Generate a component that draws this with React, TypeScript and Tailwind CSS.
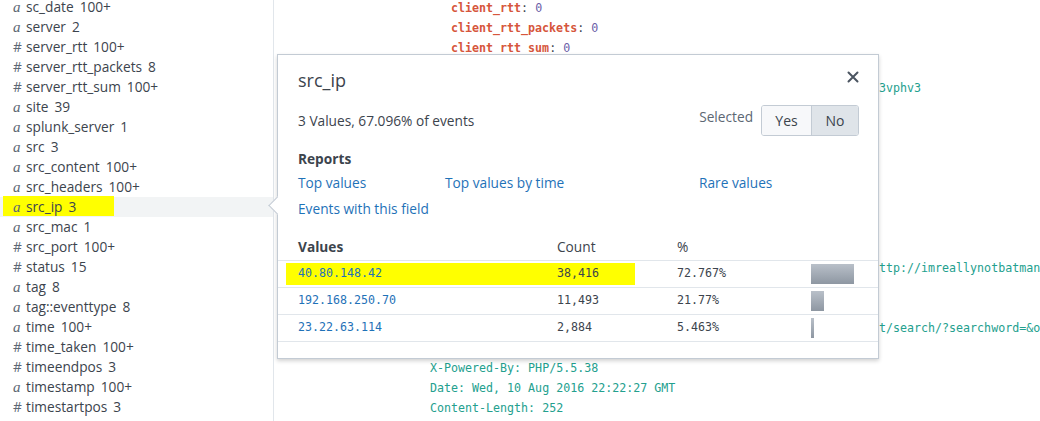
import React from "react";

const fields: [string, string, string][] = [
  ["a", "sc_date", "100+"],
  ["a", "server", "2"],
  ["#", "server_rtt", "100+"],
  ["#", "server_rtt_packets", "8"],
  ["#", "server_rtt_sum", "100+"],
  ["a", "site", "39"],
  ["a", "splunk_server", "1"],
  ["a", "src", "3"],
  ["a", "src_content", "100+"],
  ["a", "src_headers", "100+"],
  ["a", "src_ip", "3"],
  ["a", "src_mac", "1"],
  ["#", "src_port", "100+"],
  ["#", "status", "15"],
  ["a", "tag", "8"],
  ["a", "tag::eventtype", "8"],
  ["a", "time", "100+"],
  ["#", "time_taken", "100+"],
  ["#", "timeendpos", "3"],
  ["a", "timestamp", "100+"],
  ["#", "timestartpos", "3"],
  ["a", "timezone", "1"],
];

const rows = [
  { v: "40.80.148.42", c: "38,416", p: "72.767%", w: 43, hl: true },
  { v: "192.168.250.70", c: "11,493", p: "21.77%", w: 13, hl: false },
  { v: "23.22.63.114", c: "2,884", p: "5.463%", w: 3, hl: false },
];

function Sidebar() {
  return (
    <div className="w-[274px] shrink-0 border-r border-[#e1e6eb] h-full overflow-hidden font-['Open_Sans',sans-serif] text-[13.7px] text-[#3c444d]">
      <div className="-mt-[3px] flex flex-col">
        {fields.map(([t, n, c]) => {
          const sel = n === "src_ip";
          return (
            <div
              key={n}
              className={
                "relative h-[20px] flex items-center pl-[13px] " +
                (sel ? "bg-[#f2f4f5]" : "")
              }
            >
              {sel && (
                <div className="absolute left-[3px] top-[-1px] w-[111px] h-[20px] bg-[#ffff00]" />
              )}
              <span
                className={
                  "relative w-[13px] " +
                  (t === "a"
                    ? "font-['Liberation_Serif',serif] italic text-[15px] text-[#5c6773]"
                    : "text-[#5c6773]")
                }
              >
                {t}
              </span>
              <span className="relative">{n}</span>
              <span className="relative ml-[6px]">{c}</span>
            </div>
          );
        })}
      </div>
    </div>
  );
}

const teal = "text-[#23a08e]";

function EventText() {
  const lines: React.ReactNode[] = [
    <div className="pl-[177px]"><span className="text-[#d6563c] font-bold">client_rtt</span>: <span className="text-[#6b5ea8]">0</span></div>,
    <div className="pl-[177px]"><span className="text-[#d6563c] font-bold">client_rtt_packets</span>: <span className="text-[#6b5ea8]">0</span></div>,
    <div className="pl-[177px]"><span className="text-[#d6563c] font-bold">client_rtt_sum</span>: <span className="text-[#6b5ea8]">0</span></div>,
    <div />,
    <div className={"pl-[605px] " + teal}>3vphv3</div>,
    <div />, <div />, <div />, <div />, <div />, <div />, <div />, <div />,
    <div className={"pl-[605px] " + teal}>ttp://imreallynotbatman.com/joomla/</div>,
    <div />, <div />,
    <div className={"pl-[605px] " + teal}>t/search/?searchword=&amp;ordering=</div>,
    <div />,
    <div className={"pl-[156px] " + teal}>X-Powered-By: PHP/5.5.38</div>,
    <div className={"pl-[156px] " + teal}>Date: Wed, 10 Aug 2016 22:22:27 GMT</div>,
    <div className={"pl-[156px] " + teal}>Content-Length: 252</div>,
  ];
  return (
    <div className="flex-1 h-full overflow-hidden font-['DejaVu_Sans_Mono',monospace] text-[11.65px] text-[#3c444d]">
      <div className="-mt-[2px] flex flex-col whitespace-nowrap">
        {lines.map((l, i) => (
          <div key={i} className="h-[20px] leading-[20px]">
            {l}
          </div>
        ))}
      </div>
    </div>
  );
}

function Popover() {
  return (
    <div className="absolute left-[277px] top-[54px] w-[602px] h-[305px] bg-white border border-[#c3cbd4] shadow-[0_2px_4px_rgba(0,0,0,0.18)] font-['Open_Sans',sans-serif] text-[#3c444d]">
      {/* arrow */}
      <div className="absolute left-[-7px] top-[144px] w-[13px] h-[13px] bg-white border-l border-b border-[#c3cbd4] rotate-45" />
      <div className="relative px-[20px] pt-[12px]">
        <div className="flex items-center justify-between h-[26px]">
          <div className="text-[18px]">src_ip</div>
          <svg width="12" height="12" viewBox="0 0 12 12" className="mr-[-1px] -mt-[6px]">
            <path d="M1.5 1.5 L10.5 10.5 M10.5 1.5 L1.5 10.5" stroke="#4b5561" strokeWidth="2" strokeLinecap="round" />
          </svg>
        </div>
        <div className="flex items-center justify-between mt-[12px]">
          <div className="text-[13.7px] mt-[2px]">3 Values, 67.096% of events</div>
          <div className="flex items-center">
            <span className="text-[13.7px] text-[#5c6773] mr-[8px] -mt-[6px]">Selected</span>
            <div className="flex h-[31px] border border-[#c3cbd4] rounded-[3px] overflow-hidden text-[14px] mr-[-1px]">
              <div className="w-[50px] flex items-center justify-center bg-[#f7f8fa] border-r border-[#c3cbd4]">Yes</div>
              <div className="w-[46px] flex items-center justify-center bg-[#dfe4e9]">No</div>
            </div>
          </div>
        </div>
        <div className="mt-[13px] text-[13.7px] font-bold h-[20px] leading-[20px]">Reports</div>
        <div className="grid grid-cols-[147px_254px_1fr] text-[13.7px] text-[#1f72b8] mt-[4px]">
          <div className="h-[26px] leading-[20px]">Top values</div>
          <div className="h-[26px] leading-[20px]">Top values by time</div>
          <div className="h-[26px] leading-[20px]">Rare values</div>
          <div className="col-span-3 h-[20px] leading-[20px]">Events with this field</div>
        </div>
      </div>
      <div className="mt-[18px]">
        <div className="flex h-[24px] items-center border-b border-[#e1e6eb] text-[13.7px] pb-[2px]">
          <div className="w-[279px] pl-[20px] font-bold">Values</div>
          <div className="w-[120px]">Count</div>
          <div className="w-[134px]">%</div>
        </div>
        {rows.map((r) => (
          <div
            key={r.v}
            className="relative flex h-[27px] items-center border-b border-[#e1e6eb] font-['DejaVu_Sans_Mono',monospace] text-[11.65px]"
          >
            {r.hl && (
              <div className="absolute left-[8px] top-[2px] w-[349px] h-[22px] bg-[#ffff00]" />
            )}
            <div className="relative w-[279px] pl-[20px] text-[#1f72b8]">{r.v}</div>
            <div className="relative w-[120px]">{r.c}</div>
            <div className="relative w-[134px]">{r.p}</div>
            <div className="relative flex-1 flex items-center">
              <div
                className="h-[20px] bg-gradient-to-b from-[#b9c0c9] to-[#8e97a2]"
                style={{ width: r.w }}
              />
            </div>
          </div>
        ))}
      </div>
    </div>
  );
}

export default function App() {
  return (
    <div className="relative w-[1040px] h-[421px] overflow-hidden bg-white flex">
      <Sidebar />
      <EventText />
      <Popover />
    </div>
  );
}
